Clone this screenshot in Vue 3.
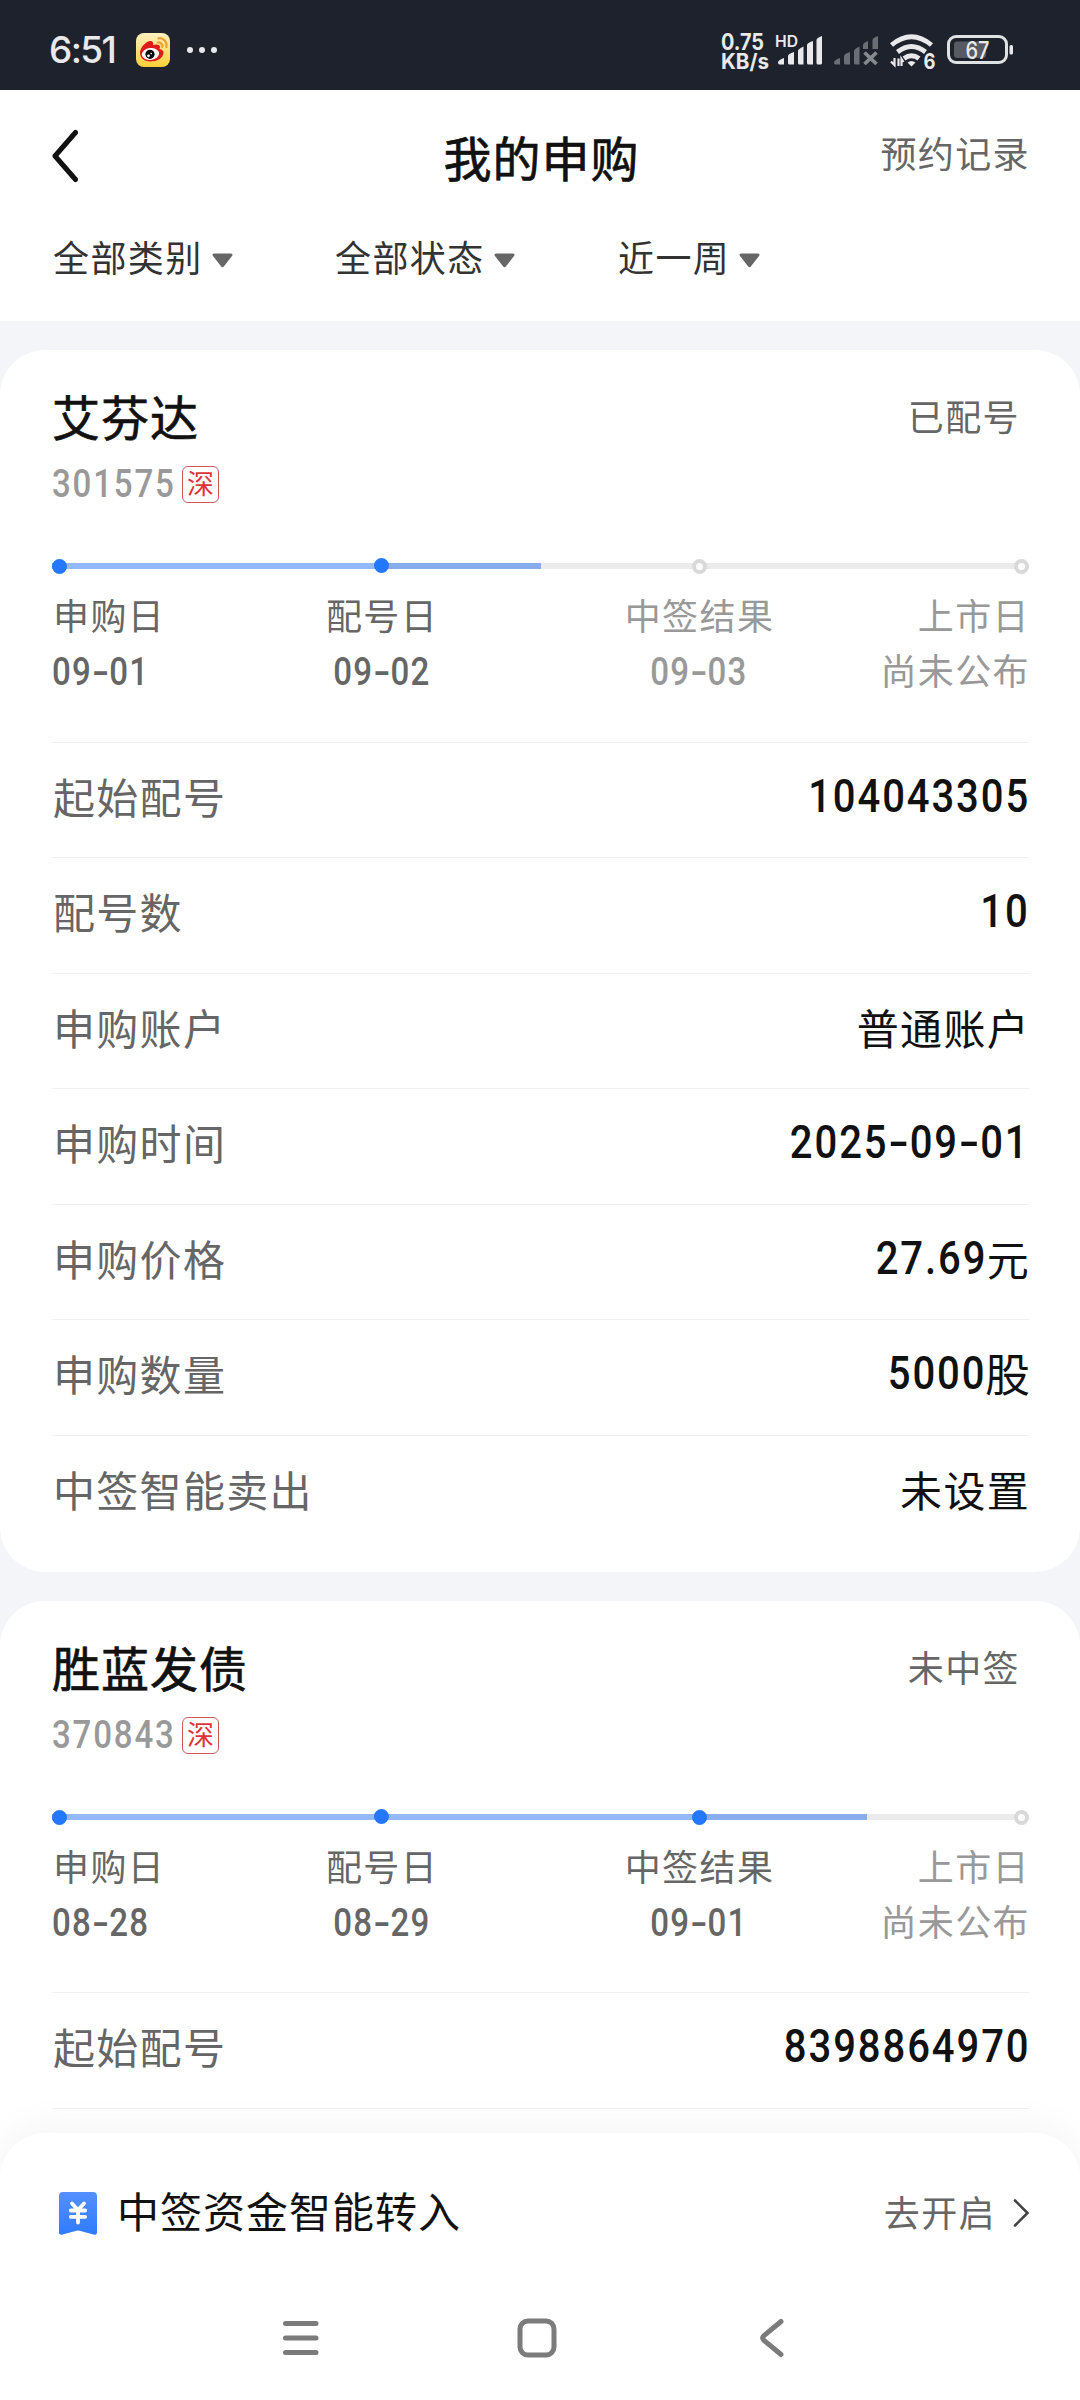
<script setup>
const filters = [
  { label: '全部类别', width: 282 },
  { label: '全部状态', width: 283 },
  { label: '近一周', width: 160 },
]

const cards = [
  {
    name: '艾芬达',
    code: '301575',
    status: '已配号',
    done: 330,
    half: 159,
    steps: [
      { label: '申购日', date: '09-01', active: true },
      { label: '配号日', date: '09-02', active: true },
      { label: '中签结果', date: '09-03', active: false },
      { label: '上市日', text: '尚未公布', active: false },
    ],
    rows: [
      { label: '起始配号', num: '104043305' },
      { label: '配号数', num: '10' },
      { label: '申购账户', text: '普通账户' },
      { label: '申购时间', num: '2025-09-01' },
      { label: '申购价格', num: '27.69', text: '元' },
      { label: '申购数量', num: '5000', text: '股', large: true },
      { label: '中签智能卖出', text: '未设置' },
    ],
  },
  {
    name: '胜蓝发债',
    code: '370843',
    status: '未中签',
    done: 648,
    half: 167,
    steps: [
      { label: '申购日', date: '08-28', active: true },
      { label: '配号日', date: '08-29', active: true },
      { label: '中签结果', date: '09-01', active: true },
      { label: '上市日', text: '尚未公布', active: false },
    ],
    rows: [{ label: '起始配号', num: '8398864970' }],
  },
]

// Splits a date into digit groups and hyphens so the hyphens can be widened.
const parts = (s) => s.split(/(-)/)
</script>

<template>
  <div class="screen">
    <div class="statusbar">
      <span class="time">6:51</span>
      <svg class="weibo" width="34" height="34" viewBox="0 0 34 34">
        <defs>
          <linearGradient id="wb" x1="0" y1="0" x2="0" y2="1">
            <stop offset="0" stop-color="#fdf0c0" />
            <stop offset="1" stop-color="#fdd038" />
          </linearGradient>
        </defs>
        <rect width="34" height="34" rx="8" fill="url(#wb)" />
        <path d="M4 20C4 15 9 9 14 8C17 8 17.500 10 17 12C20 11 24 11 24 14L23.500 16C26 16.500 28 18 27.500 20C27 25 21 28.500 14.500 28.500C8.500 28.500 4 25 4 20Z" fill="#e01b1b" />
        <ellipse cx="14.500" cy="21" rx="8.700" ry="6" fill="#fff" transform="rotate(-6 14.500 21)" />
        <circle cx="14" cy="21.300" r="4.600" fill="#0b0b0b" />
        <circle cx="12.500" cy="22.800" r="1.400" fill="#fff" />
        <circle cx="15.200" cy="20.600" r=".8" fill="#fff" />
        <path d="M22 9.500C24.500 9 27 11.500 26.200 14M22.500 5.300C27.500 4.500 31.500 9 30.300 14" fill="none" stroke="#f0a030" stroke-width="2.200" stroke-linecap="round" />
      </svg>
      <svg class="dots" width="32" height="8" viewBox="0 0 32 8" fill="#e9e9eb">
        <circle cx="4" cy="4" r="3" /><circle cx="16" cy="4" r="3" /><circle cx="28" cy="4" r="3" />
      </svg>
      <svg class="indicators" width="300" height="60" viewBox="718 20 300 60">
        <g fill="#e9e9eb" class="sys">
          <text x="721" y="49.500" font-size="22.500" font-weight="700" textLength="43" lengthAdjust="spacingAndGlyphs">0.75</text>
          <text x="721" y="69" font-size="21" font-weight="700" textLength="48" lengthAdjust="spacingAndGlyphs">KB/s</text>
          <text x="775" y="46.500" font-size="15.500" font-weight="600" textLength="23" lengthAdjust="spacingAndGlyphs">HD</text>
          <path d="M778 62.500Q778 60 784 58V64.500H779.500Q778 64.500 778 62.500ZM788 56Q788 54 794 52V64.500H789.500Q788 64.500 788 63ZM798 51Q798 49 803.500 46.500V64.500H799.500Q798 64.500 798 63ZM807 45Q807 43 813 41V64.500H808.500Q807 64.500 807 63ZM816.500 40Q816.500 38 822 36V63Q822 64.500 820.500 64.500H818Q816.500 64.500 816.500 63Z" />
          <path fill="#6b6e75" d="M834 62.500Q834 60 840 58V64.500H835.500Q834 64.500 834 62.500ZM844 56Q844 54 850 52V64.500H845.500Q844 64.500 844 63ZM854 51Q854 49 859.500 46.500V64.500H855.500Q854 64.500 854 63ZM863 45Q863 43 868 41V49H863ZM872.500 40Q872.500 38 878 36V49H872.500Z" />
          <path d="M864.500 52.500L876.500 64M876.500 52.500L864.500 64" stroke="#85888e" stroke-width="3.800" />
          <g fill="none" stroke="#e9e9eb" stroke-width="4.800">
            <path d="M891.500 45Q911.500 28.500 931.500 45" />
            <path d="M897.500 52Q911.500 41 925.500 52" />
            <path d="M904 58.500Q911.500 53 919 58.500" />
          </g>
          <path d="M907.500 62.500Q911.500 59.500 915.500 62.500L911.500 66.500Z" />
          <path d="M891 61.500L894.500 65V58M898.500 66V58.500M901.500 66V59L903.500 62" fill="none" stroke="#e9e9eb" stroke-width="2.200" />
          <circle cx="929.500" cy="62.500" r="8.500" fill="#1e222c" />
          <text x="923.500" y="69" font-size="21.500" font-weight="700" textLength="12" lengthAdjust="spacingAndGlyphs">6</text>
          <rect x="948.500" y="36.500" width="58" height="26" rx="7.500" fill="none" stroke="#e0e1e3" stroke-width="3" />
          <rect x="954" y="41.500" width="32" height="16.500" rx="3" fill="#565a63" />
          <rect x="1009.500" y="45" width="3.500" height="9.500" rx="1.500" />
          <text x="965.500" y="58.500" font-size="24" font-weight="500" textLength="24" lengthAdjust="spacingAndGlyphs">67</text>
        </g>
      </svg>
    </div>

    <header class="header">
      <div class="titlebar">
        <svg class="back" width="28" height="56" viewBox="0 0 28 56">
          <path d="M25.500 4.500L5 28L25.500 51.500" fill="none" stroke="#111" stroke-width="5" stroke-linecap="round" stroke-linejoin="round" />
        </svg>
        <h1>我的申购</h1>
        <span class="record">预约记录</span>
      </div>
      <div class="filters">
        <div v-for="f in filters" :key="f.label" class="filter" :style="{ width: f.width + 'px' }">
          <span>{{ f.label }}</span>
          <svg width="21" height="15" viewBox="0 0 21 15">
            <path d="M2 .5H19Q21.500 1 20 3L12 13.300Q10.500 15 9 13.300L1 3Q-.5 1 2 .5Z" fill="#666" />
          </svg>
        </div>
      </div>
    </header>

    <main class="list">
      <section v-for="card in cards" :key="card.code" class="card">
        <div class="cardhead">
          <h2>{{ card.name }}</h2>
          <span class="state">{{ card.status }}</span>
        </div>
        <div class="coderow">
          <span class="code">{{ card.code }}</span>
          <span class="market">深</span>
        </div>
        <div class="timeline">
          <div class="track">
            <i class="done" :style="{ width: card.done + 'px' }"></i>
            <i class="half" :style="{ width: card.half + 'px' }"></i>
          </div>
          <div v-for="s in card.steps" :key="s.label" class="step" :class="{ active: s.active }">
            <i class="dot"></i>
            <span class="steplabel">{{ s.label }}</span>
            <span v-if="s.date" class="stepdate"><span v-for="(p, i) in parts(s.date)" :key="i" :class="{ dash: p === '-' }">{{ p }}</span></span>
            <span v-else class="steptext">{{ s.text }}</span>
          </div>
        </div>
        <div class="rows">
          <div v-for="r in card.rows" :key="r.label" class="row">
            <span class="label">{{ r.label }}</span>
            <span class="value"><span v-if="r.num" class="num"><span v-for="(p, i) in parts(r.num)" :key="i" :class="{ dash: p === '-' }">{{ p }}</span></span><span v-if="r.text" class="unit" :class="{ large: r.large }">{{ r.text }}</span></span>
          </div>
        </div>
      </section>
    </main>

    <footer class="sheet">
      <div class="transfer">
        <svg class="ticket" width="38" height="43" viewBox="0 0 38 43">
          <defs>
            <linearGradient id="tk" x1="0" y1="0" x2="0" y2="1">
              <stop offset="0" stop-color="#5590ff" />
              <stop offset="1" stop-color="#2f7bff" />
            </linearGradient>
          </defs>
          <path d="M4 0H34Q38 0 38 4V40Q38 43.500 34.500 42.500L20.500 38.800Q19 38.400 17.500 38.800L3.500 42.500Q0 43.500 0 40V4Q0 0 4 0Z" fill="url(#tk)" />
          <path d="M13 11.500L19 18L25 11.500M11.800 18.500H26.200M11.800 24.800H26.200M19 18V30.500" fill="none" stroke="#fff" stroke-width="3.800" stroke-linecap="round" />
        </svg>
        <span class="transfertext">中签资金智能转入</span>
        <span class="open">去开启</span>
        <svg class="more" width="18" height="30" viewBox="0 0 18 30">
          <path d="M3 2.500L15.500 15L3 27.500" fill="none" stroke="#444" stroke-width="2.600" stroke-linecap="round" />
        </svg>
      </div>
      <nav class="nav">
        <svg class="menu" width="38" height="38" viewBox="0 0 38 38"><path d="M3.500 4.500H34M3.500 19H34M3.500 33.500H34" stroke="#7b7b7b" stroke-width="5" stroke-linecap="round" /></svg>
        <svg class="home" width="40" height="40" viewBox="0 0 40 40"><rect x="3" y="3" width="34" height="34" rx="8" fill="none" stroke="#7b7b7b" stroke-width="5" /></svg>
        <svg width="26" height="40" viewBox="0 0 26 40"><path d="M22 3.500L5 17.500Q2.500 20 5 22.500L22 36.500" fill="none" stroke="#7b7b7b" stroke-width="5" stroke-linecap="round" /></svg>
      </nav>
    </footer>
  </div>
</template>

<style>
body {
  margin: 0;
  background: #f3f5f9;
}
</style>

<style scoped>
.screen {
  position: relative;
  display: flex;
  flex-direction: column;
  width: 1080px;
  height: 2400px;
  overflow: hidden;
  background: #f3f5f9;
  font-family: "Noto Sans CJK SC", sans-serif;
  color: #111;
}
svg { display: block; flex: none; }
h1, h2 { margin: 0; font-weight: 400; -webkit-text-stroke: 0.7px #111; }

.statusbar {
  flex: none;
  height: 90px;
  box-sizing: border-box;
  display: flex;
  align-items: center;
  padding: 10px 62px 0 49px;
  background: #1e222c;
}
.time {
  width: 87px;
  font: 500 37px/44px Inter, sans-serif;
  letter-spacing: -1.6px;
  color: #e9e9eb;
}
.dots { margin-left: 16px; }
.indicators { margin-left: auto; }
.sys { font-family: Inter, sans-serif; }

.header { flex: none; height: 231px; background: #fff; }
.titlebar {
  display: grid;
  grid-template-columns: 300px 1fr 300px;
  align-items: center;
  height: 132px;
  padding: 0 50px;
}
h1 {
  text-align: center;
  font-size: 48px;
  line-height: 60px;
  letter-spacing: 1px;
  padding-left: 3px;
}
.record {
  justify-self: end;
  font-size: 36px;
  line-height: 50px;
  letter-spacing: 1.4px;
  color: #666;
  margin-top: -9px;
}
.filters { display: flex; padding: 9px 0 0 53px; }
.filter { display: flex; align-items: center; gap: 9px; }
.filter span {
  font-size: 36px;
  line-height: 50px;
  letter-spacing: 1.4px;
  color: #333;
}
.filter svg { margin-top: 9px; }

.list {
  flex: 1;
  display: flex;
  flex-direction: column;
  gap: 29px;
  padding-top: 29px;
}
.card {
  background: #fff;
  border-radius: 45px;
  padding: 35px 51px 21.5px 52px;
}
.card:last-child { flex: 1; }
.card:last-child .rows { border-bottom: 1px solid #f0f0f0; }
.cardhead { display: flex; justify-content: space-between; align-items: center; height: 60px; }
h2 { font-size: 48px; line-height: 60px; letter-spacing: 1px; }
.state { margin-right: 9px; font-size: 36px; line-height: 60px; letter-spacing: 1.4px; color: #666; }
.coderow { display: flex; align-items: center; height: 37px; margin-top: 21px; }
.code {
  width: 130px;
  font: 500 38px/39px Roboto, sans-serif;
  letter-spacing: 2.1px;
  white-space: nowrap;
  color: #999;
  transform: scaleX(0.87);
  transform-origin: left center;
}
.market {
  box-sizing: border-box;
  width: 37px;
  height: 37px;
  border: 1.5px solid #d0565e;
  border-radius: 6px;
  font-size: 27px;
  line-height: 31px;
  text-align: center;
  color: #e0343c;
}

.timeline {
  position: relative;
  display: grid;
  grid-template-columns: 170px 319px 316px 172px;
  margin-top: 56px;
  height: 182.5px;
}
.track {
  position: absolute;
  left: 0;
  right: 4px;
  top: 4px;
  height: 6px;
  display: flex;
  background: #ebebeb;
}
.done { background: #94b9fb; }
.half { background: #88adec; }
.step {
  position: relative;
  display: flex;
  flex-direction: column;
  align-items: center;
  color: #999;
  font-size: 36px;
  white-space: nowrap;
}
.step:nth-child(2) { align-items: flex-start; }
.step:last-child { align-items: flex-end; }
.dot {
  box-sizing: border-box;
  width: 15px;
  height: 15px;
  border: 4px solid #d9d9d9;
  border-radius: 50%;
  background: #fff;
}
.active { color: #666; }
.active .dot { border-color: #2477ff; background: #2477ff; }
.step:nth-child(3) .dot { margin-top: -1px; margin-bottom: 1px; }
.steplabel, .steptext { line-height: 50px; letter-spacing: 1.4px; }
.steplabel { margin-top: 15px; margin-left: 1px; }
.steptext { margin-top: 5px; }
.step:last-child .steplabel, .step:last-child .steptext { margin-right: -1px; }
.stepdate {
  font: 500 38px/57px Roboto, sans-serif;
  letter-spacing: 1.3px;
  margin-top: 5px;
  transform: scaleX(0.87);
}
.step:nth-child(2) .stepdate { transform-origin: left center; }
.dash {
  display: inline-block;
  width: 0.53em;
  text-align: center;
  letter-spacing: 0;
  transform: scaleX(1.5);
}

.row {
  display: flex;
  justify-content: space-between;
  align-items: center;
  box-sizing: border-box;
  height: 115.5px;
  padding-bottom: 8px;
  border-top: 1px solid #f0f0f0;
  font-size: 42px;
  line-height: 60px;
  letter-spacing: 1.3px;
}
.label { color: #666; margin-left: 1px; }
.value { display: flex; align-items: center; }
.unit { margin-right: -1px; }
.large { font-size: 45px; letter-spacing: 0; }
.num {
  font: 500 46px/60px Roboto, sans-serif;
  letter-spacing: 2.2px;
  margin-right: -1px;
  transform: scaleX(0.87);
  transform-origin: right center;
}

.sheet {
  position: absolute;
  left: 0;
  right: 0;
  bottom: 0;
  height: 267px;
  border-radius: 45px 45px 0 0;
  background: #fff;
  box-shadow: 0 -4px 40px rgba(0, 0, 0, 0.05);
}
.transfer { display: flex; align-items: center; height: 160px; padding: 0 50px 0 59px; }
.transfertext { margin-left: 20px; font-size: 42px; line-height: 60px; letter-spacing: 1px; margin-top: -7px; }
.open { margin-left: auto; font-size: 36px; line-height: 50px; letter-spacing: 1.4px; color: #666; margin-top: -5px; }
.more { margin-left: 16px; }
.nav {
  display: flex;
  align-items: center;
  height: 90px;
  padding-left: 282px;
}
.home { margin: 0 202px 0 197px; }
</style>
